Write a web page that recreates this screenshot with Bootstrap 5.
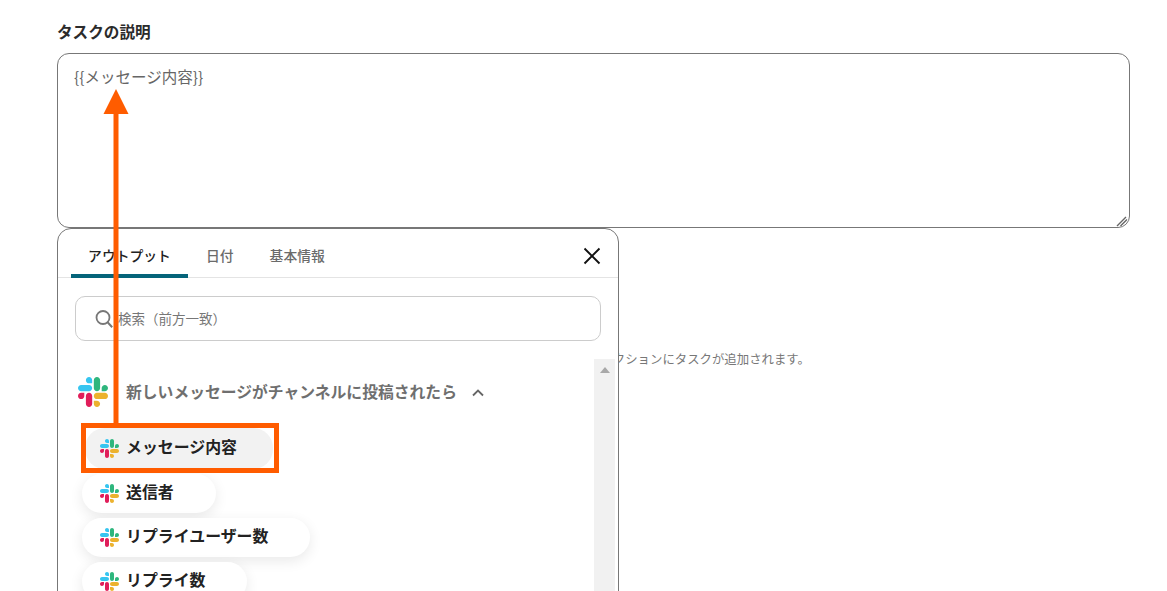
<!DOCTYPE html>
<html lang="ja">
<head>
<meta charset="utf-8">
<link href="https://cdn.jsdelivr.net/npm/bootstrap@5.3.0/dist/css/bootstrap.min.css" rel="stylesheet">
<style>
html,body{height:591px;overflow:hidden;background:#fff}
body{font-family:"Noto Sans CJK JP","Liberation Sans",sans-serif;color:#222;position:relative}
.pg{padding:20px 37px 0 57px}
.fld-label{font-size:15.6px;font-weight:700;line-height:22px;margin:0 0 11px;color:#2b2b2b}
.tawrap{position:relative}
.desc{display:block;width:100%;height:175px;border:1px solid #777;border-radius:12px;padding:11px 16px;font-size:15.5px;line-height:22px;color:#666;outline:0;font-family:inherit;resize:none}
.grip{position:absolute;right:2px;bottom:1px}
.hint{font-size:12.4px;line-height:18px;color:#777;padding-top:122px;margin:0;white-space:nowrap}
.pop{position:absolute;left:0;top:0;width:562px;height:420px;background:#fff;border:1px solid #777;border-radius:14px;overflow:hidden}
.wrap{position:relative}
.tabbar{height:49px;border-bottom:1px solid #e4e4e4;padding-left:13px}
.tabi{font-size:13.8px;line-height:20px;padding:14px 18px 12px;color:#6b6b6b;font-weight:500;border:0;background:none;height:49px}
.tabi.on{color:#222;border-bottom:4px solid #05647a;border-radius:3px 3px 0 0;padding:14px 17px 8px;width:117px}
.xbtn{position:absolute;right:17px;top:18px;background:none;border:0;padding:0;line-height:0}
.srch{margin:18px 17px 0;height:45px;border:1px solid #ccc;border-radius:10px;padding-left:19px;gap:5px}
.srch span{font-size:13.5px;color:#777}
.scrl{position:relative;margin-top:18px;padding:0 0 0 20px;height:240px}
.sbar{position:absolute;left:536px;top:0;width:21px;height:240px;background:#f1f1f1}
.sbar i{position:absolute;left:6px;top:8px;border:5px solid transparent;border-top:0;border-bottom:6px solid #a8a8a8}
.sec{height:69px;padding-top:18px}
.sec b{font-size:15.8px;font-weight:700;color:#6f6f6f;margin-left:18px;line-height:22px;margin-top:4px}
.sec svg.chev{margin-left:14px;margin-top:9px}
.pills{padding-left:4px;gap:5px;align-items:flex-start}
.pillx{height:39px;border-radius:20px;background:#fff;box-shadow:0 4px 14px rgba(0,0,0,.09);padding:0 42px 0 18px;gap:7px;font-size:15.9px;font-weight:700;color:#222}
.pillx span{padding-bottom:3px}
.pillx.sel{background:#f2f2f2;box-shadow:none;width:188px;height:41px;margin-left:3px;padding-left:15px;padding-right:0}
.mark-box{position:absolute;left:81px;top:423px;width:198px;height:50px;border:5px solid #ff5c00}
.arrow{position:absolute;left:103px;top:88px}
</style>
</head>
<body>
<svg width="0" height="0" class="d-block position-absolute">
<symbol id="sl" viewBox="0 0 122.8 122.8">
<path d="M25.8 77.6c0 7.1-5.8 12.9-12.9 12.9S0 84.7 0 77.6s5.8-12.9 12.9-12.9h12.9v12.9zm6.5 0c0-7.1 5.8-12.9 12.9-12.9s12.9 5.8 12.9 12.9v32.3c0 7.1-5.8 12.9-12.9 12.9s-12.9-5.8-12.9-12.9V77.6z" fill="#e01e5a"/>
<path d="M45.2 25.8c-7.1 0-12.9-5.8-12.9-12.9S38.1 0 45.2 0s12.9 5.8 12.9 12.9v12.9H45.2zm0 6.5c7.1 0 12.9 5.8 12.9 12.9s-5.8 12.9-12.9 12.9H12.9C5.8 58.1 0 52.3 0 45.2s5.8-12.9 12.9-12.9h32.3z" fill="#36c5f0"/>
<path d="M97 45.2c0-7.1 5.8-12.9 12.9-12.9s12.9 5.8 12.9 12.9-5.8 12.9-12.9 12.9H97V45.2zm-6.5 0c0 7.1-5.8 12.9-12.9 12.9s-12.9-5.8-12.9-12.9V12.9C64.7 5.8 70.5 0 77.6 0s12.9 5.8 12.9 12.9v32.3z" fill="#2eb67d"/>
<path d="M77.6 97c7.1 0 12.9 5.8 12.9 12.9s-5.8 12.9-12.9 12.9-12.9-5.8-12.9-12.9V97h12.9zm0-6.5c-7.1 0-12.9-5.8-12.9-12.9s5.8-12.9 12.9-12.9h32.3c7.1 0 12.9 5.8 12.9 12.9s-5.8 12.9-12.9 12.9H77.6z" fill="#ecb22e"/>
</symbol>
</svg>
<div class="pg">
  <p class="fld-label">タスクの説明</p>
  <div class="tawrap">
    <textarea class="desc" readonly>{{メッセージ内容}}</textarea>
    <svg class="grip" width="12" height="12" viewBox="0 0 12 12"><path d="M1 11L10 2M4.5 11L11 4.5" stroke="#666" stroke-width="1.4" fill="none"/></svg>
  </div>
  <div class="wrap">
    <p class="hint">このタスクを実行すると、指定したプロジェクトのセクションにタスクが追加されます。指定したセクションにタスクが追加されます。</p>
    <div class="pop">
      <div class="tabbar d-flex align-items-start">
        <button class="tabi on">アウトプット</button>
        <button class="tabi">日付</button>
        <button class="tabi">基本情報</button>
      </div>
      <button class="xbtn" aria-label="閉じる"><svg width="18" height="18" viewBox="0 0 18 18"><path d="M1.5 1.5l15 15M16.5 1.5l-15 15" stroke="#111" stroke-width="1.9" fill="none"/></svg></button>
      <div class="srch d-flex align-items-center">
        <svg width="18" height="20" viewBox="0 0 18 20"><circle cx="8" cy="8.5" r="6.5" stroke="#777" stroke-width="1.8" fill="none"/><path d="M12.6 13.2l4.6 5" stroke="#777" stroke-width="2" fill="none"/></svg>
        <span>検索（前方一致）</span>
      </div>
      <div class="scrl">
        <div class="sbar"><i></i></div>
        <div class="sec d-flex align-items-start">
          <svg width="30" height="30"><use href="#sl"/></svg>
          <b>新しいメッセージがチャンネルに投稿されたら</b>
          <svg class="chev" width="14" height="14" viewBox="0 0 14 14"><path d="M2 9.5L7 4.5l5 5" stroke="#666" stroke-width="1.8" fill="none"/></svg>
        </div>
        <div class="pills d-flex flex-column">
          <div class="pillx sel d-flex align-items-center"><svg width="19" height="19"><use href="#sl"/></svg><span>メッセージ内容</span></div>
          <div class="pillx d-flex align-items-center"><svg width="19" height="19"><use href="#sl"/></svg><span>送信者</span></div>
          <div class="pillx d-flex align-items-center"><svg width="19" height="19"><use href="#sl"/></svg><span>リプライユーザー数</span></div>
          <div class="pillx d-flex align-items-center"><svg width="19" height="19"><use href="#sl"/></svg><span>リプライ数</span></div>
        </div>
      </div>
    </div>
  </div>
</div>
<div class="mark-box"></div>
<svg class="arrow" width="27" height="336" viewBox="0 0 27 336"><path d="M13 1L25.5 26H15.5V335H10.5V26H0.5z" fill="#ff5c00"/></svg>
</body>
</html>
